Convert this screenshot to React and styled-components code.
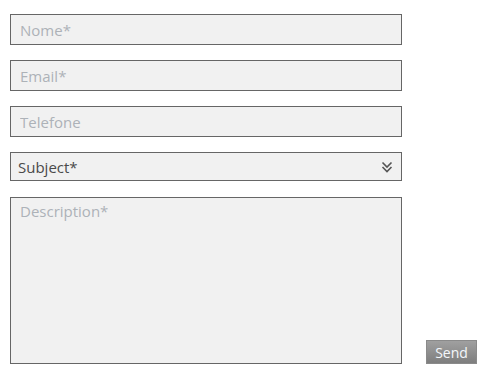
import React from "react";
import styled, { createGlobalStyle } from "styled-components";

const Global = createGlobalStyle`
  html, body { margin: 0; padding: 0; background: #fff; }
  body { font-family: "Open Sans", "Liberation Sans", sans-serif; }
`;

const Page = styled.div`
  display: flex;
  align-items: flex-end;
  gap: 24px;
  padding: 14px 0 0 10px;
`;

const Fields = styled.div`
  display: flex;
  flex-direction: column;
  width: 392px;
`;

const fieldBase = `
  box-sizing: border-box;
  width: 100%;
  border: 1px solid #666;
  background: #f1f1f1;
  font-family: "Open Sans", "Liberation Sans", sans-serif;
  font-size: 15px;
  color: #4a4a4a;
  outline: none;
  margin: 0;
`;

const Input = styled.input`
  ${fieldBase}
  height: 31px;
  padding: 0 9px;
  margin-bottom: 15px;
  &::placeholder { color: #adb2b8; opacity: 1; }
`;

const Select = styled.div`
  ${fieldBase}
  height: 29px;
  padding: 0 9px 0 7px;
  margin-bottom: 16px;
  display: flex;
  align-items: center;
  justify-content: space-between;
`;

const Chevron = styled.svg`
  width: 12px;
  height: 12px;
  margin-right: -1px;
`;

const TextArea = styled.textarea`
  ${fieldBase}
  height: 167px;
  padding: 2px 9px;
  line-height: 22px;
  resize: none;
  display: block;
  &::placeholder { color: #adb2b8; opacity: 1; }
`;

const Button = styled.button`
  box-sizing: border-box;
  width: 51px;
  height: 24px;
  padding: 0;
  border: 1px solid #8a8a8a;
  background: linear-gradient(#a0a0a0, #7e7e7e);
  color: #f4f7fb;
  font-family: "Open Sans", "Liberation Sans", sans-serif;
  font-size: 14px;
  cursor: pointer;
`;

export default function App() {
  return (
    <>
      <Global />
      <Page>
        <Fields>
          <Input placeholder="Nome*" />
          <Input placeholder="Email*" />
          <Input placeholder="Telefone" />
          <Select>
            <span>Subject*</span>
            <Chevron viewBox="0 0 12 12">
              <path d="M1.5 1.5 L6 6 L10.5 1.5 M1.5 6 L6 10.5 L10.5 6" fill="none" stroke="#555" strokeWidth="1.6" />
            </Chevron>
          </Select>
          <TextArea placeholder="Description*" />
        </Fields>
        <Button>Send</Button>
      </Page>
    </>
  );
}
